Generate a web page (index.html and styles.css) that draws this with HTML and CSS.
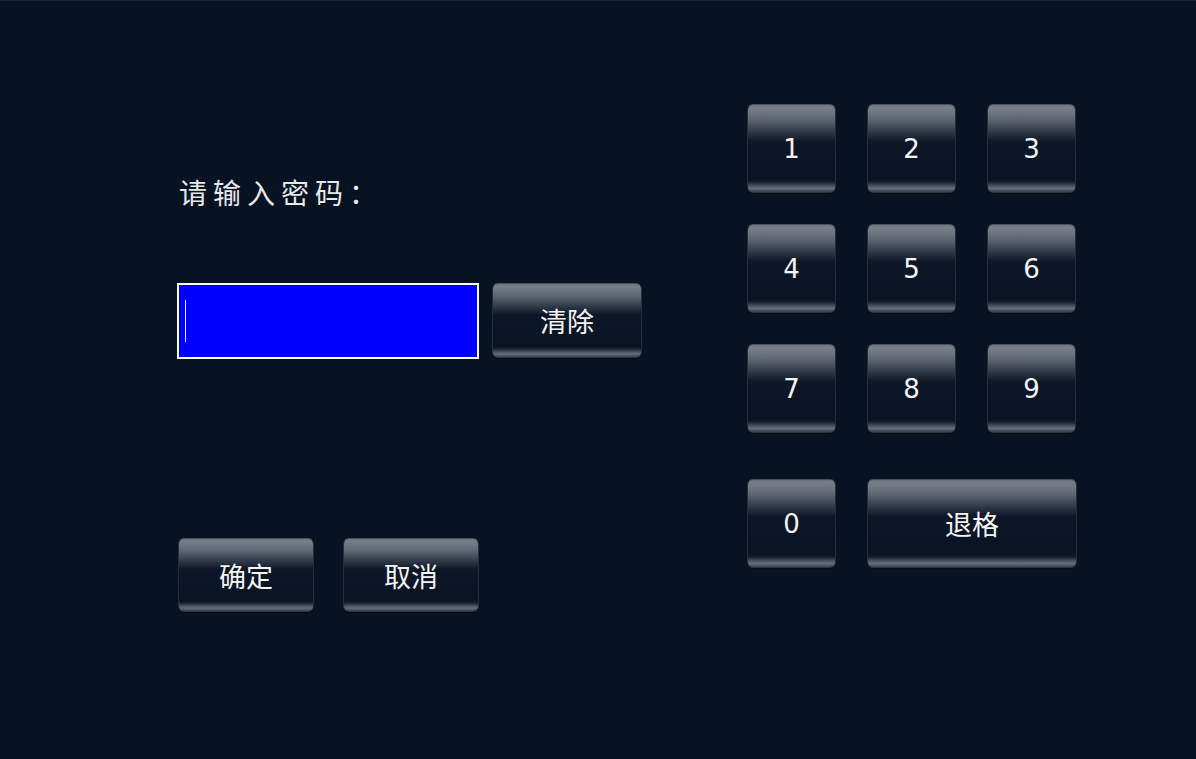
FILE: index.html
```html
<!DOCTYPE html>
<html lang="zh">
<head>
<meta charset="utf-8">
<title>请输入密码</title>
<link rel="stylesheet" href="styles.css">
</head>
<body>
<div class="screen">
  <section class="left">
    <div class="label">请输入密码：</div>
    <div class="input-row">
      <div class="pwd-input"><span class="caret"></span></div>
      <button class="btn btn-clear">清除</button>
    </div>
    <div class="actions">
      <button class="btn btn-action">确定</button>
      <button class="btn btn-action">取消</button>
    </div>
  </section>
  <section class="keypad">
    <button class="btn key">1</button>
    <button class="btn key">2</button>
    <button class="btn key">3</button>
    <button class="btn key">4</button>
    <button class="btn key">5</button>
    <button class="btn key">6</button>
    <button class="btn key">7</button>
    <button class="btn key">8</button>
    <button class="btn key">9</button>
    <button class="btn key key-zero">0</button>
    <button class="btn key key-back">退格</button>
  </section>
</div>
</body>
</html>
```
FILE: styles.css
```css
html, body {
  margin: 0;
  padding: 0;
  background: #071222;
}
.screen {
  width: 1196px;
  height: 759px;
  box-sizing: border-box;
  border-top: 1px solid #0f2833;
  display: flex;
  align-items: flex-start;
  background: #071222;
  font-family: "DejaVu Sans", "Noto Sans CJK SC", sans-serif;
  color: #f2f2f2;
}
.left {
  margin-left: 177px;
  width: 465px;
  display: flex;
  flex-direction: column;
}
.label {
  margin-top: 176px;
  height: 30px;
  line-height: 30px;
  font-family: "Noto Sans CJK SC", sans-serif;
  font-size: 28px;
  letter-spacing: 6px;
  padding-left: 2px;
  color: #e8e8ea;
}
.input-row {
  margin-top: 76px;
  display: flex;
  gap: 13px;
  align-items: flex-start;
}
.pwd-input {
  box-sizing: border-box;
  flex: none;
  width: 302px;
  height: 76px;
  border: 2px solid #ffffff;
  background: #0000fe;
  display: flex;
  align-items: center;
  padding-left: 6px;
}
.caret {
  display: block;
  width: 1px;
  height: 42px;
  background: #e8e8ff;
}
.btn {
  box-sizing: border-box;
  flex: none;
  margin: 0;
  padding: 0;
  border: 1px solid #262e3a;
  border-top-color: #4a525e;
  border-bottom-color: #2c3440;
  border-radius: 6px;
  color: #f4f4f4;
  font-family: "DejaVu Sans", "Noto Sans CJK SC", sans-serif;
  background: linear-gradient(to bottom,
    #6a727d 0%,
    #777f8a 3%,
    #5f6773 16%,
    #2c3544 32%,
    #0e1727 42%,
    #0a1323 86%,
    #1b2432 89%,
    #4a5361 93%,
    #646d7a 96%,
    #384150 100%);
  box-shadow: 0 1px 0 #040a13;
  display: flex;
  align-items: center;
  justify-content: center;
}
.btn-clear {
  width: 150px;
  height: 75px;
  font-family: "Noto Sans CJK SC", sans-serif;
  font-size: 27px;
}
.actions {
  margin-top: 179px;
  display: flex;
  gap: 29px;
  padding-left: 1px;
}
.btn-action {
  width: 136px;
  height: 74px;
  font-family: "Noto Sans CJK SC", sans-serif;
  font-size: 27px;
}
.keypad {
  margin-left: 105px;
  margin-top: 103px;
  display: grid;
  grid-template-columns: repeat(3, 89px);
  grid-template-rows: 89px 89px 89px 104px;
  column-gap: 31px;
  row-gap: 31px;
}
.key {
  height: 89px;
  font-size: 26px;
}
.key-zero {
  align-self: end;
}
.key-back {
  grid-column: 2 / span 2;
  align-self: end;
  width: 210px;
  font-family: "Noto Sans CJK SC", sans-serif;
  font-size: 27px;
}
```
